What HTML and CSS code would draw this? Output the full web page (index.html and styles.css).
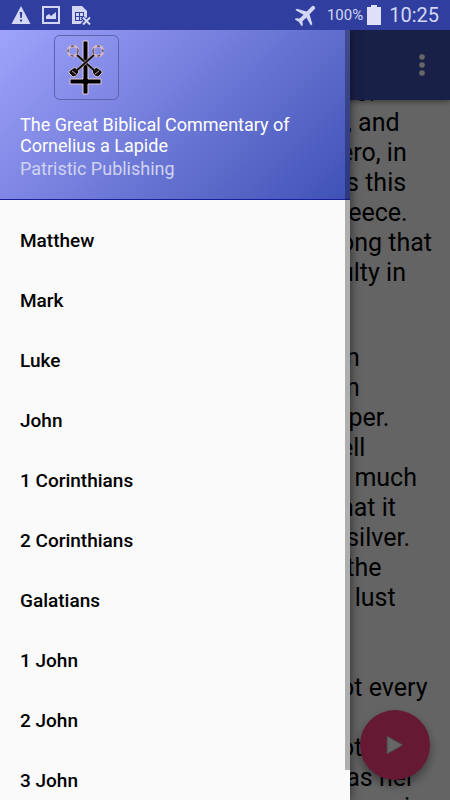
FILE: index.html
```
<!DOCTYPE html>
<html lang="en">
<head>
  <meta charset="UTF-8">
  <meta name="viewport" content="width=device-width, initial-scale=1">
  <title>The Great Biblical Commentary</title>
  <link rel="stylesheet" href="styles.css">
</head>
<body>
  <header class="status-bar">
    <div class="status-icons">
      <svg width="20" height="20" viewBox="0 0 20 20">
        <path d="M10 1 L19.500 19 H0.500 Z" fill="#d3d7f3"/>
        <path d="M8.800 7 h2.400 l-.4 6 h-1.600 z M9 14.500 h2 v2 h-2 z" fill="#303f9f"/>
      </svg>
      <svg width="20" height="20" viewBox="0 0 20 20">
        <path fill-rule="evenodd" d="M1 1 h18 v18 H1 Z M3 3 v14 h14 V3 Z" fill="#d3d7f3"/>
        <path d="M5 14 V11 l3-2 2 2 5-4 v7 Z" fill="#d3d7f3"/>
      </svg>
      <svg width="20" height="20" viewBox="0 0 20 20">
        <path d="M1 1 h10 l5 5 v13 H1 Z" fill="#d3d7f3"/>
        <path d="M4 7.500 h9 M4.500 7 v9 M4 11.500 h9 M4 15.500 h7 M8.500 7 v9 M12.500 7 v5" stroke="#303f9f" fill="none"/>
        <path d="M11 12 l8 8 M19 12 l-8 8" stroke="#303f9f" stroke-width="4"/>
        <path d="M12 12.500 l7 7 M19 12.500 l-7 7" stroke="#d3d7f3" stroke-width="2"/>
      </svg>
    </div>
    <div class="status-info">
      <svg class="plane" width="22" height="22" viewBox="1 1 22 22">
        <path transform="rotate(45 12 12)" d="M23 16 v-2 l-9-5 V2 a1.800 1.800 0 0 0-4 0 V9 L1 14 v2 l9-2.500 V19 L7 21.500 V23 l5-1 5 1 v-1.500 L14 19 v-5.500 Z" fill="#d3d7f3"/>
      </svg>
      <span class="battery-level">100%</span>
      <svg width="14" height="22" viewBox="0 0 14 22">
        <path d="M4 1 h6 v2 h4 v18 H0 V3 h4 Z" fill="#dde0f6"/>
      </svg>
      <span class="clock">10:25</span>
    </div>
  </header>

  <div class="screen">
    <main class="reader">
      <div class="toolbar">
        <button class="menu-button" aria-label="More options">
          <svg width="6" height="22" viewBox="0 0 6 22" fill="#fff">
            <circle cx="3" cy="3" r="2.800"/><circle cx="3" cy="11" r="2.800"/><circle cx="3" cy="19" r="2.800"/>
          </svg>
        </button>
      </div>
      <div class="page-text">
        <p>r o.<br>r, and<br>ero, in<br>is this<br>reece.<br>ong that<br>ulty in</p>
        <p>in<br>in<br>rper.<br>ell<br>t much<br>hat it<br>&nbsp;silver.<br>&nbsp;the<br>r lust<br><br><br>ot every<br><br>ot<br>&nbsp;as her<br>vows in</p>
      </div>
      <button class="play-button" aria-label="Play">
        <svg width="20" height="20" viewBox="0 0 20 20">
          <path d="M2 1 L18 10 L2 19 Z" fill="#fff" stroke="#b8a4aa"/>
        </svg>
      </button>
    </main>
    <div class="scrim"></div>

    <aside class="drawer">
      <div class="drawer-header">
        <svg class="logo" width="66" height="66" viewBox="0 0 66 66">
          <rect x="1.500" y="1.500" width="64" height="64" rx="5" fill="none" stroke="#5c62ae"/>
          <path d="M30 7 h5 v38 h13 v5 H35 v10 h-5 v-10 H17 v-5 h13 Z" fill="#000" stroke="#e4ccd8"/>
          <g id="key">
            <circle cx="20" cy="17" r="5" fill="none" stroke="#d9b9c2" stroke-width="2.500"/>
            <circle cx="20" cy="17" r="5" fill="none" stroke="#28202c" stroke-dasharray="3 4"/>
            <path d="M24 21 L43 38" stroke="#d9bcc8" stroke-width="3"/>
            <path d="M39 38 l4-5 6 4 v2 l-4 4 -3-1 z" fill="#111" stroke="#d9bcc8"/>
            <path d="M24 21 L43 38" stroke="#111" stroke-width="2"/>
            <path d="M42 40 l4-3" stroke="#b8a0b0"/>
          </g>
          <use href="#key" transform="matrix(-1 0 0 1 65 0)"/>
        </svg>
        <h1>The Great Biblical Commentary of Cornelius a Lapide</h1>
        <div class="publisher">Patristic Publishing</div>
      </div>
      <nav class="book-list">
        <a href="#">Matthew</a>
        <a href="#">Mark</a>
        <a href="#">Luke</a>
        <a href="#">John</a>
        <a href="#">1 Corinthians</a>
        <a href="#">2 Corinthians</a>
        <a href="#">Galatians</a>
        <a href="#">1 John</a>
        <a href="#">2 John</a>
        <a href="#">3 John</a>
      </nav>
      <div class="scroll-thumb"></div>
    </aside>
  </div>
</body>
</html>
```
FILE: styles.css
```
* {
  box-sizing: border-box;
}

body {
  margin: 0;
  height: 100vh;
  display: flex;
  flex-direction: column;
  overflow: hidden;
  font-family: Roboto, sans-serif;
  background: #fafafa;
}

button {
  border: none;
  padding: 0;
  display: flex;
  align-items: center;
  justify-content: center;
}

/* status bar */
.status-bar {
  height: 30px;
  flex: none;
  display: flex;
  align-items: center;
  justify-content: space-between;
  padding: 0 11px;
  background: #303f9f;
  color: #d3d7f3;
}

.status-icons,
.status-info {
  display: flex;
  align-items: center;
}

.status-icons {
  gap: 10px;
}

.plane {
  margin-right: 10px;
}

.battery-level {
  font-size: 15px;
  margin-right: 4px;
}

.clock {
  font-size: 20px;
  margin-left: 8px;
}

.screen {
  position: relative;
  flex: 1;
  min-height: 0;
  overflow: hidden;
}

/* page under the drawer */
.reader {
  position: relative;
  height: 100%;
  overflow: hidden;
}

.toolbar {
  position: relative;
  z-index: 1;
  height: 70px;
  display: flex;
  align-items: center;
  justify-content: flex-end;
  padding-right: 16px;
  background: #3f51b5;
  box-shadow: 0 2px 5px rgba(0, 0, 0, 0.4);
}

.menu-button {
  width: 24px;
  height: 40px;
  background: none;
}

.page-text {
  margin-top: -22px;
  margin-left: 340px;
  font-size: 25px;
  line-height: 30px;
  white-space: nowrap;
  color: #000;
}

.page-text p {
  margin: 0 0 55px;
}

.play-button {
  position: absolute;
  right: 20px;
  bottom: 20px;
  width: 70px;
  height: 70px;
  border-radius: 50%;
  background: #ff4081;
  box-shadow: 0 5px 10px rgba(0, 0, 0, 0.4);
}

.scrim {
  position: absolute;
  inset: 0;
  z-index: 2;
  background: rgba(0, 0, 0, 0.6);
}

/* drawer */
.drawer {
  position: absolute;
  top: 0;
  bottom: 0;
  left: 0;
  z-index: 3;
  width: 350px;
  overflow: hidden;
  background: #fafafa;
  box-shadow: 0 0 10px rgba(0, 0, 0, 0.6);
}

.drawer-header {
  height: 170px;
  padding: 4px 20px 0;
  background: linear-gradient(135deg, #9fa3fb, #3f51b5);
  border-bottom: 1px solid #1a1f9c;
  color: #fff;
}

.logo {
  display: block;
  margin-left: 33px;
}

.drawer-header h1 {
  margin: 14px 0 0;
  font-size: 18px;
  line-height: 21px;
  font-weight: 400;
}

.publisher {
  margin-top: 2px;
  font-size: 18px;
  line-height: 21px;
  color: #d0d3f2;
}

.book-list {
  padding-top: 10px;
}

.book-list a {
  display: flex;
  align-items: center;
  height: 60px;
  padding: 0 20px;
  font-size: 19px;
  font-weight: 500;
  color: #000;
  text-decoration: none;
}

.scroll-thumb {
  position: absolute;
  top: 0;
  right: 0;
  bottom: 30px;
  width: 5px;
  background: rgba(0, 0, 0, 0.3);
}
```
